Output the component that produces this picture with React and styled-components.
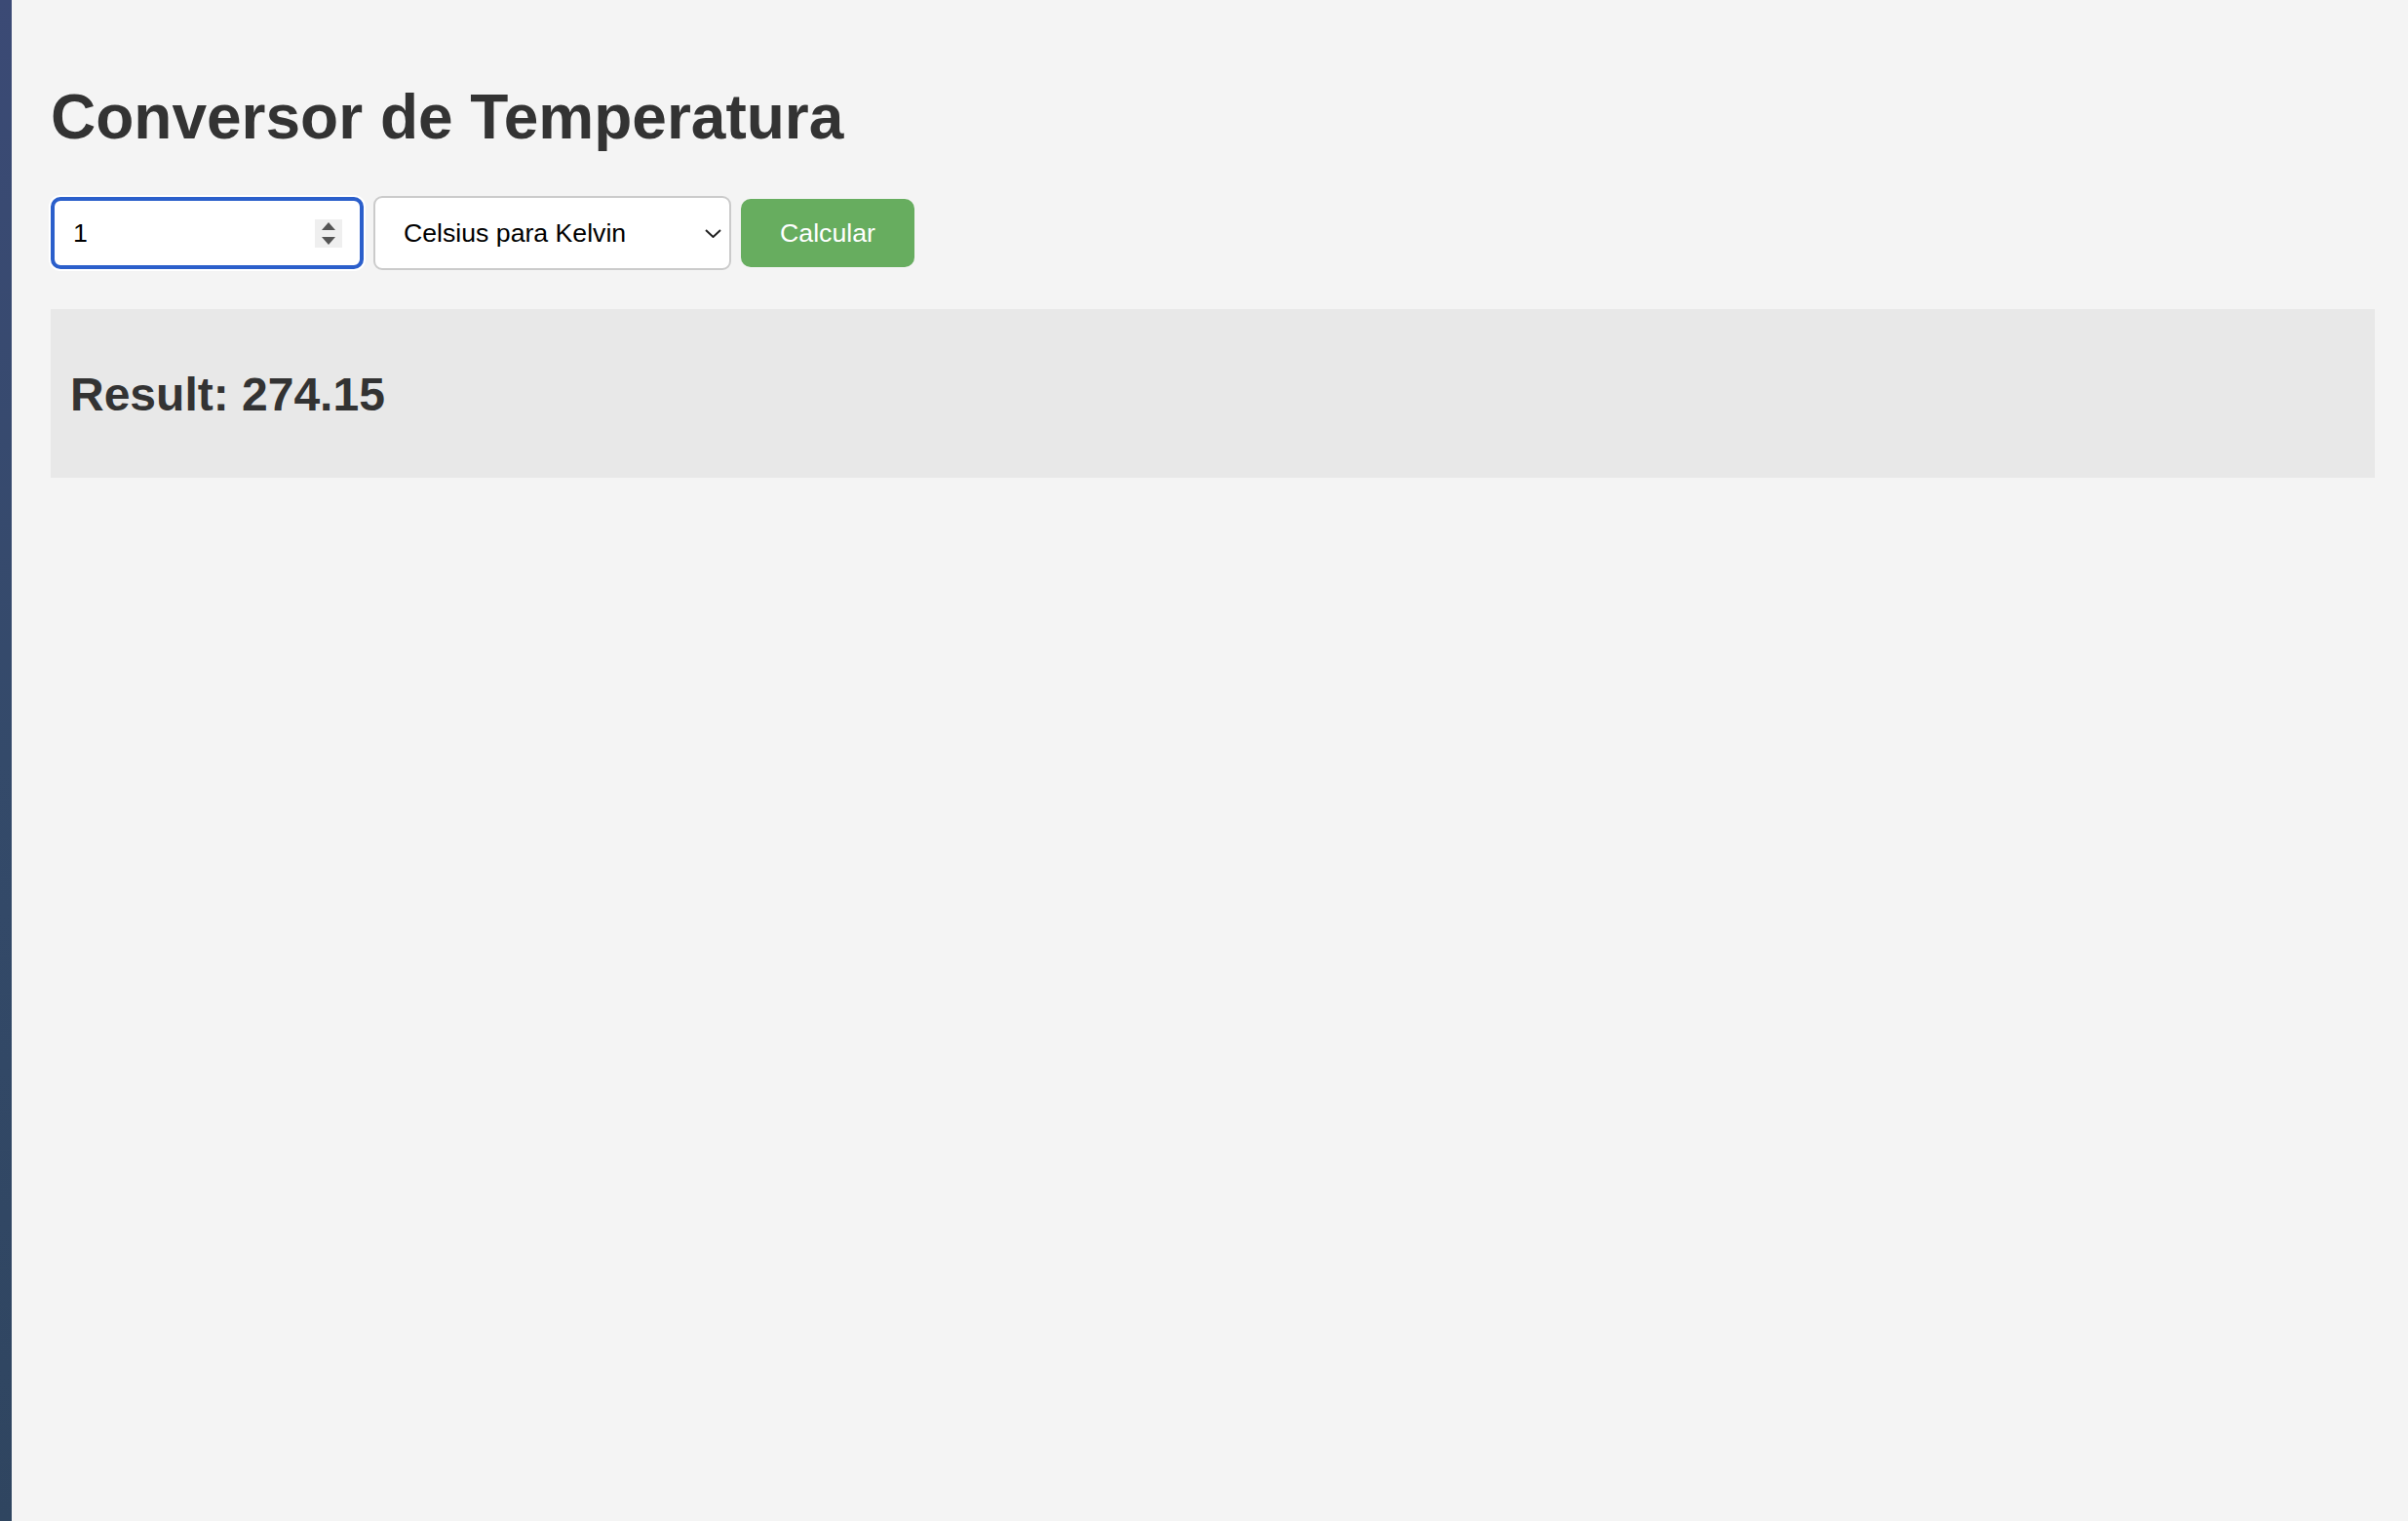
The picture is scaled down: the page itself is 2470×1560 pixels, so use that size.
import React, {useState} from "react";
import styled, {createGlobalStyle} from "styled-components";

const GlobalStyle = createGlobalStyle`
  html, body {
    margin: 0;
    padding: 0;
    background: #f4f4f4;
  }
  body {
    font-family: "Liberation Sans", Arial, sans-serif;
  }
`;

const Page = styled.div`
  display: flex;
  min-height: 100vh;
  background: #f4f4f4;
`;

// dark window edge at the far left
const EdgeStrip = styled.div`
  width: 12px;
  flex-shrink: 0;
  background: linear-gradient(180deg, #3b4a75 0%, #344a6a 50%, #2f4560 100%);
`;

const Main = styled.main`
  flex: 1;
  padding: 83px 34px 0 40px;
`;

const Title = styled.h1`
  margin: 0 0 44px;
  font-size: 64px;
  line-height: 74px;
  font-weight: 700;
  color: #333;
`;

const Row = styled.div`
  display: flex;
  align-items: center;
  gap: 10px;
  height: 76px;
`;

const NumberField = styled.div`
  box-sizing: border-box;
  width: 321px;
  height: 74px;
  display: flex;
  align-items: center;
  padding: 0 18px 0 19px;
  background: #fff;
  border: 4px solid #2b5fcb;
  border-radius: 10px;
  box-shadow: 0 0 0 2px #fff;
`;

const NumberInput = styled.input`
  flex: 1;
  min-width: 0;
  border: 0;
  outline: none;
  background: transparent;
  padding: 0;
  font-family: "Liberation Sans", Arial, sans-serif;
  font-size: 26.67px;
  color: #000;
`;

const Spinner = styled.div`
  width: 28px;
  height: 29px;
  background: #efefef;
  display: flex;
  flex-direction: column;
  align-items: center;
  justify-content: center;
  gap: 7px;
`;

const SelectBox = styled.div`
  box-sizing: border-box;
  width: 367px;
  height: 76px;
  display: flex;
  align-items: center;
  padding: 0 8px 0 29px;
  background: #fff;
  border: 2px solid #cbcbcb;
  border-radius: 9px;
`;

const Select = styled.select`
  flex: 1;
  appearance: none;
  border: 0;
  outline: none;
  background: transparent;
  padding: 0;
  font-family: "Liberation Sans", Arial, sans-serif;
  font-size: 26.67px;
  color: #000;
`;

const Button = styled.button`
  box-sizing: border-box;
  width: 178px;
  height: 70px;
  border: 0;
  border-radius: 10px;
  background: #67ad5f;
  color: #fff;
  font-family: "Liberation Sans", Arial, sans-serif;
  font-size: 26.67px;
  cursor: pointer;
`;

const ResultPanel = styled.div`
  margin-top: 40px;
  background: #e8e8e8;
  padding: 60px 20px 58px;
`;

const ResultText = styled.h2`
  margin: 0;
  font-size: 48px;
  line-height: 55px;
  font-weight: 700;
  color: #333;
`;

function convert(value, mode) {
  const n = parseFloat(value);
  if (isNaN(n)) return "";
  if (mode === "c2k") return (n + 273.15).toFixed(2);
  if (mode === "k2c") return (n - 273.15).toFixed(2);
  if (mode === "c2f") return (n * 9 / 5 + 32).toFixed(2);
  return ((n - 32) * 5 / 9).toFixed(2);
}

export default function App() {
  const [value, setValue] = useState("1");
  const [mode, setMode] = useState("c2k");
  const [result, setResult] = useState("274.15");

  return (
    <Page>
      <GlobalStyle />
      <EdgeStrip />
      <Main>
        <Title>Conversor de Temperatura</Title>
        <Row>
          <NumberField>
            <NumberInput value={value} onChange={e => setValue(e.target.value)} />
            <Spinner>
              <svg width="14" height="8" viewBox="0 0 14 8"><path d="M7 0 L14 8 L0 8 Z" fill="#555" /></svg>
              <svg width="14" height="8" viewBox="0 0 14 8"><path d="M0 0 L14 0 L7 8 Z" fill="#555" /></svg>
            </Spinner>
          </NumberField>
          <SelectBox>
            <Select value={mode} onChange={e => setMode(e.target.value)}>
              <option value="c2k">Celsius para Kelvin</option>
              <option value="k2c">Kelvin para Celsius</option>
              <option value="c2f">Celsius para Fahrenheit</option>
              <option value="f2c">Fahrenheit para Celsius</option>
            </Select>
            <svg width="17" height="9" viewBox="0 0 17 9">
              <path d="M1 1 L8.5 8 L16 1" fill="none" stroke="#222" strokeWidth="2" />
            </svg>
          </SelectBox>
          <Button onClick={() => setResult(convert(value, mode))}>Calcular</Button>
        </Row>
        <ResultPanel>
          <ResultText>Result: {result}</ResultText>
        </ResultPanel>
      </Main>
    </Page>
  );
}
